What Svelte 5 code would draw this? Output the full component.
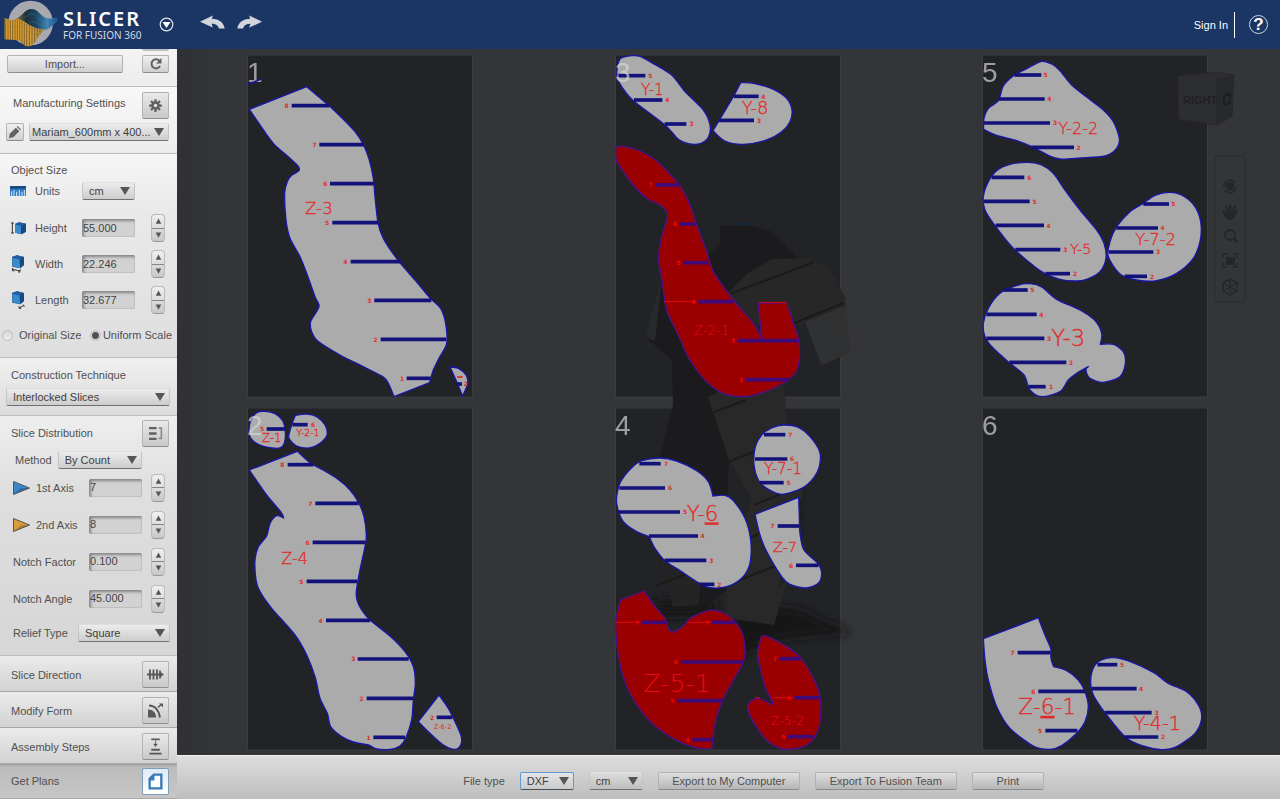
<script>
  let fileType = $state('DXF');
  let exportUnits = $state('cm');
  let scale = $state('uniform');

  const sizes = $state([
    { id: 'height', name: 'Height', value: '55.000' },
    { id: 'width', name: 'Width', value: '22.246' },
    { id: 'length', name: 'Length', value: '32.677' }
  ]);
  const slices = $state([
    { id: 'axis1', name: '1st Axis', value: '7', color: 'blue' },
    { id: 'axis2', name: '2nd Axis', value: '8', color: 'gold' },
    { id: 'factor', name: 'Notch Factor', value: '0.100' },
    { id: 'angle', name: 'Notch Angle', value: '45.000' }
  ]);
  const panels = [
    { name: 'Slice Direction', icon: 'direction' },
    { name: 'Modify Form', icon: 'form' },
    { name: 'Assembly Steps', icon: 'assembly' },
    { name: 'Get Plans', icon: 'plans', active: true }
  ];

  // Part outlines are point lists in thirds of a canvas unit; "!" marks a sharp corner.
  // A slot is [start, end, y, number, number x]; a label is [text, x, baseline, size].
  const sheets = [
    {
      n: 1, x: 248, y: 55, ox: 240, oy: 50,
      parts: [
        {
          pts: '28,178! 200,110! 265,165 310,208 345,245 370,283 388,330 400,385 405,440 414,518 430,565 475,632 525,690 572,746 602,775 617,820 620,880 597,925 580,960 569,998! 462,1040! 445,1000 428,980 370,950 300,915 233,873 215,845 212,815 237,770 225,740 200,670 180,620 150,565 138,510 134,430 142,395 155,376 177,362 174,348 150,325 100,280 60,225',
          slots: [[155, 268, 167, 8, 140], [238, 372, 284, 7, 224], [270, 402, 401, 6, 256], [277, 414, 518, 5, 261], [332, 484, 635, 4, 316], [403, 574, 751, 3, 388], [422, 619, 868, 2, 407], [500, 572, 985, 1, 486]],
          label: ['Z-3', 195, 491, 50]
        },
        { pts: '630,951! 655,955 678,975 683,1000 668,1038! 650,995', slots: [[650, 666, 1002, 2, 677]], marks: [[651, 668, 981]] }
      ]
    },
    {
      n: 2, x: 248, y: 408, ox: 240, oy: 400,
      parts: [
        { pts: '50,38 75,34 105,41 128,62 136,95 133,130 120,144 95,144 60,135 35,118 27,95 32,62', slots: [[80, 135, 87, 5, 66]], label: ['Z-1', 65, 126, 36] },
        { pts: '166,46! 200,42 230,50 255,75 261,105 240,130 208,144 170,138 150,120 146,108 155,75', slots: [[157, 203, 74, 6, 219]], label: ['Y-2-1', 169, 109, 28] },
        {
          pts: '28,210! 172,154! 212,190 240,205 290,235 330,270 356,308 372,350 379,405 375,440 360,510 349,575 351,600 365,630 390,660 450,708 495,755 520,800 526,850 520,900 515,960 497,1015 480,1038 450,1048 410,1047 385,1035 340,1026 305,1010 272,980 262,940 240,895 225,830 200,765 165,705 95,625 60,575 48,540 45,480 55,440 80,408 90,370 110,347 131,354! 122,335 80,285',
          slots: [[143, 220, 194, 8, 127], [226, 356, 310, 7, 211], [218, 375, 427, 6, 203], [200, 352, 544, 5, 184], [258, 390, 661, 4, 242], [353, 506, 777, 3, 340], [380, 520, 895, 2, 365], [400, 495, 1012, 1, 386]],
          label: ['Z-4', 124, 492, 48]
        },
        { pts: '597,885! 535,965! 570,1000 610,1035 645,1048 662,1035 664,1010 645,965 625,925', slots: [[590, 637, 952, 2, 576]], label: ['Z-6-2', 581, 987, 20, true] }
      ]
    },
    {
      n: 3, x: 616, y: 55, ox: 600, oy: 50,
      parts: [
        { pts: '60,27 95,17 120,19 155,38 215,75 255,125 310,180 330,225 325,262 300,281 265,281 235,268 195,225 100,152 65,110 50,75', slots: [[55, 136, 77, 5, 151], [102, 187, 150, 4, 202], [194, 259, 222, 3, 275]], label: ['Y-1', 123, 134, 46] },
        { pts: '422,98! 460,100 520,118 560,145 576,180 570,215 545,245 500,270 430,283 375,273 339,242! 370,190 400,140', slots: [[402, 476, 139, 4, 490], [357, 462, 211, 3, 477]], label: ['Y-8', 425, 193, 54] },
        {
          bad: true,
          pts: '48,292! 70,289 120,303 170,333 215,378 245,415 270,465 290,525 320,605 340,665 400,750 460,820 486,868! 474,760! 560,758! 580,820 596,870 598,930 585,970 540,1005 480,1030 430,1040 370,1030 320,995 270,930 230,845 200,780 186,690 176,625 185,560 203,498 185,468 140,445 100,405 60,350 48,325',
          slots: [[166, 238, 405, 7, 152], [240, 288, 522, 6, 225], [250, 325, 638, 5, 236], [295, 400, 755, 4, 281], [413, 592, 872, 3, 400], [438, 570, 989, 2, 424]],
          marks: [[192, 290, 755], [478, 560, 757]],
          label: ['Z-2-1', 281, 855, 40]
        }
      ]
    },
    {
      n: 4, x: 616, y: 408, ox: 600, oy: 400,
      parts: [
        {
          pts: '125,182 180,174 230,183 290,212 325,245 339,288! 375,286 400,302 435,355 452,420 450,490 425,535 380,560 330,563 295,548 240,512 195,482 165,445 148,410! 110,395 70,365 53,325 50,290 62,245 95,203',
          slots: [[118, 182, 191, 7, 198], [58, 195, 264, 6, 210], [55, 240, 336, 5, 255], [147, 294, 408, 4, 308], [194, 319, 481, 3, 334], [298, 343, 553, 2, 358]],
          label: ['Y-6', 260, 362, 64]
        },
        { pts: '515,84 550,75 595,82 630,110 659,155 658,200 640,235 605,265 545,283 500,265 475,240 462,195 466,140 485,105', slots: [[492, 556, 104, 7, 571], [465, 562, 177, 6, 576], [480, 551, 248, 5, 566]], label: ['Y-7-1', 492, 222, 46] },
        { pts: '465,343! 596,292! 598,350 600,400 612,450 655,492 665,520 655,550 618,564 570,553 545,530 500,455 480,405', slots: [[533, 597, 378, 7, 518], [588, 655, 496, 6, 573]], label: ['Z-7', 518, 455, 44] },
        {
          bad: true,
          pts: '62,600! 132,573! 165,620 195,655 205,685 218,696 250,678 268,657 300,640 330,631 365,636 400,660 425,695 435,745 430,785 400,840 365,905 345,970 335,1045! 300,1045 250,1030 180,990 125,935 85,870 62,800 50,730 48,660',
          slots: [[125, 200, 667, 7, 112], [335, 408, 667, 7, 321], [243, 430, 786, 6, 227], [233, 370, 902, 5, 218], [277, 340, 1019, 4, 263]],
          marks: [[48, 120, 667], [262, 335, 667]],
          label: ['Z-5-1', 130, 875, 76]
        },
        {
          bad: true,
          pts: '483,712! 497,708 560,740 605,778 640,835 660,890 661,960 645,1010 610,1040 550,1047 500,1020 460,965 443,925 450,905 475,895 500,905 516,915! 518,905! 495,860 480,800 473,760',
          slots: [[538, 602, 776, 7, 525], [583, 660, 893, 6, 568], [563, 642, 1010, 5, 550]],
          marks: [[465, 480, 893], [518, 583, 893]],
          label: ['Z-5-2', 512, 974, 38]
        }
      ]
    },
    {
      n: 5, x: 983, y: 55, ox: 970, oy: 50,
      parts: [
        { pts: '170,56 215,34 245,42 270,62 305,105 355,145 400,180 430,215 448,265 440,295 405,318 330,324 270,327 235,316 185,290 140,272 80,256 41,238! 42,205 55,175 85,152 100,108 130,78', slots: [[134, 214, 75, 5, 227], [86, 224, 147, 4, 238], [42, 240, 219, 3, 255], [184, 312, 292, 2, 326]], label: ['Y-2-2', 265, 251, 48] },
        { pts: '120,343 175,337 215,345 250,370 285,420 330,480 380,540 402,580 408,625 390,665 350,688 320,693 270,688 215,665 130,595 70,520 45,480 40,440 55,395 80,362', slots: [[65, 163, 382, 6, 178], [42, 179, 454, 5, 194], [77, 222, 526, 4, 236], [136, 271, 599, 3, 286], [226, 300, 671, 2, 315]], label: ['Y-5', 300, 611, 43] },
        { pts: '555,436 600,427 640,438 675,470 692,515 691,570 670,625 620,670 560,692 500,690 450,672 415,620 420,575 440,530 480,485 520,460', slots: [[520, 597, 462, 5, 610], [439, 564, 534, 4, 578], [417, 550, 606, 3, 564], [464, 531, 679, 2, 546]], label: ['Y-7-2', 496, 585, 49] },
        {
          pts: '145,705 180,701 215,711 260,748 330,780 375,812 395,850 391,883! 430,883 460,905 466,940 450,980 400,997 360,985 348,960 355,950! 320,970 295,990 270,1025 215,1040 180,1020 162,975 120,940 70,895 45,860 40,820 55,775 90,730',
          slots: [[102, 173, 720, 5, 187], [49, 200, 793, 4, 214], [49, 223, 865, 3, 237], [118, 289, 937, 2, 303], [176, 227, 1010, 1, 243]],
          label: ['Y-3', 244, 889, 68]
        }
      ]
    },
    {
      n: 6, x: 983, y: 408, ox: 970, oy: 600,
      parts: [
        { pts: '40,116! 205,53! 225,105 242,145 243,175 251,200! 290,212 325,240 345,275 355,320 345,365 320,400 275,437 240,448 190,438 120,385 80,320 55,240 45,180', slots: [[143, 242, 158, 7, 128], [205, 346, 274, 6, 190], [226, 322, 392, 5, 210]], label: ['Z-6-1', 145, 342, 65] },
        { pts: '395,180 430,173 475,183 550,217 595,250 650,275 685,315 695,355 675,400 620,440 575,449 520,438 470,415 410,345 370,285 362,240 372,200', slots: [[382, 442, 194, 5, 456], [365, 500, 266, 4, 513], [405, 545, 338, 3, 560], [464, 565, 411, 2, 579]], label: ['Y-4-1', 491, 391, 57] }
      ]
    }
  ];

  function outline(list) {
    const p = list.split(' ').map((s) => {
      const [x, y] = s.replace('!', '').split(',').map(Number);
      return { x, y, sharp: s.endsWith('!') };
    });
    const n = p.length;
    let d = `M${p[0].x} ${p[0].y}`;
    for (let i = 0; i < n; i++) {
      const before = p[(i + n - 1) % n];
      const a = p[i];
      const b = p[(i + 1) % n];
      const after = p[(i + 2) % n];
      const ax = a.sharp ? a.x : a.x + (b.x - before.x) / 7;
      const ay = a.sharp ? a.y : a.y + (b.y - before.y) / 7;
      const bx = b.sharp ? b.x : b.x - (after.x - a.x) / 7;
      const by = b.sharp ? b.y : b.y - (after.y - a.y) / 7;
      d += `C${ax.toFixed(1)} ${ay.toFixed(1)} ${bx.toFixed(1)} ${by.toFixed(1)} ${b.x} ${b.y}`;
    }
    return d + 'Z';
  }
</script>

{#snippet stepper(name)}
  <span class="stepper">
    <button aria-label="Increase {name}"><svg viewBox="0 0 8 6"><path d="M4 0 7.200 6H.8z" /></svg></button>
    <button aria-label="Decrease {name}"><svg viewBox="0 0 8 6"><path d="M4 6 7.200 0H.8z" /></svg></button>
  </span>
{/snippet}

{#snippet arrow()}
  <svg class="arrow" viewBox="0 0 10 8" aria-hidden="true"><path d="M0 0h10L5 8z" /></svg>
{/snippet}

{#snippet cube(kind)}
  <svg class="cube" viewBox="0 0 48 54" aria-hidden="true">
    {#if kind === 'height'}
      <path d="M3 12h9M3 42h9M7 12v30" stroke="#333" stroke-width="3" fill="none" />
      <path d="m15 15 12-5 21 4v25l-13 7-20-5z" fill="#174a80" />
      <path d="m15 16 18 4v26l-18-5z" fill="#3a8ad0" /><path d="m15 15 12-5 21 4-15 6z" fill="#245f9c" />
    {:else}
      <path d="m6 6 15-5 21 5v25l-11 9-24-5z" fill="#174a80" />
      <path d="m7 8 21 4 3 28-23-6z" fill="#3a8ad0" /><path d="m6 6 15-5 21 5-14 6z" fill="#245f9c" />
      {#if kind === 'width'}
        <path d="m8 43 22 5M8 39l-1 8 6 1M31 43l-2 9-5-2" stroke="#333" stroke-width="3" fill="none" />
      {:else}
        <path d="m27 51 14-7M27 46l1 7 5-1M40 41l3 6" stroke="#333" stroke-width="3" fill="none" />
      {/if}
    {/if}
  </svg>
{/snippet}

<div class="app">
  <header>
    <svg class="logo" viewBox="0 0 180 147" aria-hidden="true">
      <defs>
        <linearGradient id="sea" x1="0" x2="1"><stop offset="0" stop-color="#8a7d45" /><stop offset=".25" stop-color="#1c2f3a" /><stop offset=".5" stop-color="#1d4666" /><stop offset=".75" stop-color="#3f86b8" /><stop offset="1" stop-color="#1c5088" /></linearGradient>
        <linearGradient id="gold" x1="0" x2="1"><stop offset="0" stop-color="#e8a52c" /><stop offset=".65" stop-color="#cf9c3e" /><stop offset="1" stop-color="#8d8355" /></linearGradient>
      </defs>
      <circle cx="92" cy="69" r="67" fill="#a7a9af" />
      <path d="M46 58c18-6 27-31 49-31 20 0 28 24 46 28 12 2 22-4 32-1l1 9c-14 10-24 24-40 27-24 6-50-4-88-32z" fill="url(#sea)" />
      <path d="M14 54c16 8 28 5 38 3 16 2 26 12 38 19 16 9 32 13 49 10-14 8-22 20-28 33-7 14-18 20-29 20-14 0-15-18-28-18l-40-3z" fill="url(#gold)" />
      <path d="M17 56v61M24 59v59M31 60v59M38 60v60M45 59v61M52 58v63M59 60v62M66 63v68M73 68v69M80 72v67M88 76v61M96 79v53M104 82v44M112 85v28M120 86v17" stroke="#54431f" stroke-width="2" fill="none" />
      <path d="M15 68c24 7 35 1 51 8 14 7 22 15 36 19 10 3 16 4 24 2M16 84c22 6 32 0 47 6 14 6 22 17 34 19 7 1 13 1 18-1M17 100c20 5 32 1 44 6 12 6 20 16 34 18" stroke="#c98f2c" stroke-width="1.500" fill="none" />
      <path d="M72 52c12-3 18-14 28-10 12 7 20 26 44 28M88 68c10-4 18-4 26 3 6 5 12 7 22 6" stroke="#4e91b8" stroke-width="2" fill="none" opacity=".5" />
    </svg>
    <div class="brand"><strong>SLICER</strong><span>FOR FUSION 360</span></div>
    <button class="plain drop" aria-label="Application menu">
      <svg viewBox="0 0 15 15"><circle cx="7.500" cy="7.500" r="6.300" fill="none" stroke="#dfe5ee" stroke-width="1.200" /><path d="M3.500 5h8l-4 6z" fill="#fff" /></svg>
    </button>
    <button class="plain arrows undo" aria-label="Undo">
      <svg viewBox="0 0 74 42"><path d="M0 19 38 0l-3 10c22 1 36 12 38 29H56c-2-9-9-14-22-14l4 11z" fill="#d3d5dd" /></svg>
    </button>
    <button class="plain arrows" aria-label="Redo">
      <svg viewBox="0 0 74 42"><path d="M74 19 36 0l3 10C17 11 3 22 1 39h17c2-9 9-14 22-14l-4 11z" fill="#d3d5dd" /></svg>
    </button>
    <a class="signin" href="#signin">Sign In</a>
    <button class="plain help" aria-label="Help"><span>?</span></button>
  </header>

  <main>
    <aside>
      <section class="import">
        <div class="sliver"></div>
        <button class="btn wide">Import...</button>
        <button class="btn reload" aria-label="Reload">
          <svg viewBox="0 0 14 12"><path d="M10.500 3A4.500 4.500 0 1 0 11 8" fill="none" stroke="#606060" stroke-width="2" /><path d="M12.500 0v5.500H7z" fill="#606060" /></svg>
        </button>
      </section>

      <section class="manufacturing">
        <div class="head">
          <h2 class="indent">Manufacturing Settings</h2>
          <button class="btn tool" aria-label="Manufacturing settings">
            <svg viewBox="-8 -8 16 16"><path d="M0-6.800V6.800M-6.800 0H6.800M-4.800-4.800 4.800 4.800M4.800-4.800-4.800 4.800" stroke="#606060" stroke-width="2.400" /><circle r="4.600" fill="#606060" /><circle r="1.800" fill="#e4e4e4" /></svg>
          </button>
        </div>
        <div class="row preset">
          <button class="btn pencil" aria-label="Edit preset">
            <svg viewBox="0 0 14 14"><path d="m0 14 1-5 7-7 4 4-7 7zM9 1l1-1 4 4-1 1z" fill="#606060" /></svg>
          </button>
          <span class="select grow"><select aria-label="Material preset"><option>Mariam_600mm x 400...</option></select>{@render arrow()}</span>
        </div>
      </section>

      <section class="size">
        <h2>Object Size</h2>
        <div class="row units">
          <svg class="ruler" viewBox="0 0 48 30" aria-hidden="true"><path d="M0 0h48v30H0z" fill="#2f78bd" /><path d="M0 0h48v8H0z" fill="#174b82" /><path d="M5 30V16M12 30V12M20 30V17M28 30V12M36 30V17M43 30V12" stroke="#d9ecfb" stroke-width="3" /></svg>
          <label for="units">Units</label>
          <span class="select"><select id="units"><option>cm</option></select>{@render arrow()}</span>
        </div>
        {#each sizes as s}
          <div class="row measure">
            {@render cube(s.id)}
            <label for={s.id}>{s.name}</label>
            <input class="field" id={s.id} bind:value={s.value} />
            {@render stepper(s.name)}
          </div>
        {/each}
        <div class="row radios">
          <label><input type="radio" name="scale" value="original" bind:group={scale} /><span>Original Size</span></label>
          <label><input type="radio" name="scale" value="uniform" bind:group={scale} /><span>Uniform Scale</span></label>
        </div>
      </section>

      <section class="technique">
        <h2><label for="technique">Construction Technique</label></h2>
        <span class="select"><select id="technique"><option>Interlocked Slices</option></select>{@render arrow()}</span>
      </section>

      <section class="distribution">
        <div class="head">
          <h2>Slice Distribution</h2>
          <button class="btn tool" aria-label="Slice distribution">
            <svg viewBox="0 0 14 14"><path d="M1 2h7M1 7h7M1 12h7" stroke="#606060" stroke-width="2.200" /><path d="M10 2h2.500v9.500H10" fill="none" stroke="#8a8a8a" stroke-width="1.500" /></svg>
          </button>
        </div>
        <div class="row method">
          <label for="method">Method</label>
          <span class="select"><select id="method"><option>By Count</option></select>{@render arrow()}</span>
        </div>
        {#each slices as s}
          <div class="row slice" class:axis={s.color}>
            {#if s.color}
              <svg class="flag {s.color}" viewBox="0 0 17 14" aria-hidden="true"><path d="M.5.5 16.500 7 .5 13.500z" stroke="#555" /><path d="M1 13 16 7H8z" fill="#000" opacity=".2" /></svg>
            {/if}
            <label for={s.id}>{s.name}</label>
            <input class="field" id={s.id} bind:value={s.value} />
            {@render stepper(s.name)}
          </div>
        {/each}
        <div class="row relief">
          <label for="relief">Relief Type</label>
          <span class="select"><select id="relief"><option>Square</option></select>{@render arrow()}</span>
        </div>
      </section>

      {#each panels as p}
        <section class="panel" class:active={p.active}>
          <h2>{p.name}</h2>
          <button class="btn tool" aria-label={p.name}>
            {#if p.icon === 'direction'}
              <svg class="big" viewBox="0 0 17 12"><path d="M0 6h14M3 1v10M6.500 1v10M10 1v10M13 2v8" stroke="#585858" stroke-width="1.800" /><path d="m13 3 4 3-4 3z" fill="#585858" /></svg>
            {:else if p.icon === 'form'}
              <svg class="big" viewBox="0 0 17 16"><path d="M1 15V7c5 0 8 3 8 8z" fill="#585858" /><path d="M2 3c6 0 10 5 11 12" fill="none" stroke="#585858" stroke-width="2" /><path d="m11 5 3-3" stroke="#585858" stroke-width="1.500" /><path d="M12 1h4v4z" fill="#585858" /></svg>
            {:else if p.icon === 'assembly'}
              <svg class="big" viewBox="0 0 14 18"><path d="M2.500 1.500h9M2.500 12.500h9M.5 16.500h13" stroke="#585858" stroke-width="2" /><path d="M7 3v3" stroke="#585858" /><path d="M4.500 6h5L7 9.500z" fill="#585858" /></svg>
            {:else}
              <svg class="big" viewBox="0 0 14 16"><path d="M5.500 1.500h7v13h-11v-9z" fill="#fff" stroke="#3a7ab8" stroke-width="2.200" /><path d="M6 1v6H1z" fill="#3a7ab8" /></svg>
            {/if}
          </button>
        </section>
      {/each}
    </aside>

    <div class="work">
      <div class="stage">
        <svg class="canvas" viewBox="177 49 1103 706">
          <defs>
            <filter id="soft" x="-30%" y="-60%" width="160%" height="220%"><feGaussianBlur stdDeviation="5" /></filter>
          </defs>
          {#each sheets as s}
            <rect x={s.x - 0.5} y={s.y} width="225" height="342" fill="#222326" stroke="#3b3c3f" />
          {/each}

          <g class="model">
            <path d="M740 612c30-8 60-6 80 8l33 12c-40 6-70 0-110 22-20-10-20-34-3-42zM655 600h60v16h-60z" fill="#131416" filter="url(#soft)" />
            <path d="m658 290-12 48 26 22 1 45-16 62-7 60 24 80 26 1 30-20-2-110 5-90-10-70-17-20-30-20z" fill="#1b1b1d" />
            <path d="M720 226h32l21 6 26 27-20 10-40 30-35 5v-46l16-14z" fill="#1b1b1d" />
            <path d="m658 290-13 47 10 4 6-55z" fill="#27292c" />
            <path d="m726 295 22-22 24-14 38-1 20 11 15 28 1 10-38 15-36 12-28-16z" fill="#272727" />
            <path d="m805 322 38-15 7 45-29 12z" fill="#2f3133" />
            <path d="M843 307h3l5 45-29 13-1-2 28-11z" fill="#35312e" />
            <path d="m708 397 22-10 54-2 4 60 18 60-14 60-18 60-48-7 2-60 24-58-24-43z" fill="#282828" />
            <path d="m806 490-2 45-6 10-6 26-14 20 12-70z" fill="#1e2124" />
            <path d="m655 540 50-16-6 80-26 3z" fill="#242425" />
            <g stroke="#1d1a18" stroke-width="2">
              <path d="m730 294 84-32M790 325l53-22M714 412l32-12M728 462l52-20M754 505l44-18M740 580l50-20M656 586l56-22M745 540l58-26" />
            </g>
            <path d="M733 224h17" stroke="#16293a" stroke-width="2" />
          </g>

          <g class="nav">
            <path d="m1178 76 38-4 18 3-2 41-14 9-39-6z" fill="#2d2e30" stroke="#2a2a2c" />
            <path d="m1216 79 18-4-2 41-16 9z" fill="#28292b" />
            <text x="1183" y="104" font-size="11" font-weight="bold">RIGHT</text>
            <path d="m1224 96 6-2v9l-6 2zM1228 92v3" fill="none" stroke="#1b1c1e" stroke-width="1.500" />
            <g opacity=".75">
              <rect x="1215" y="156" width="30" height="146" rx="3" fill="none" stroke="#28292b" />
              <path d="M1224 187a6 6 0 0 1 11-4M1236 187a6 6 0 0 1-11 3" fill="none" stroke="#202123" stroke-width="1.500" />
              <circle cx="1230" cy="186" r="4" />
              <path d="m1225 217-3-6 2-1 3 3-2-7 2-1 2 6v-7h2l1 7 2-6 2 1-2 6 3-3 1 1-4 8-2 2h-4z" />
              <circle cx="1230" cy="235" r="5" fill="none" stroke="#202123" stroke-width="1.800" /><path d="m1234 239 3 3" stroke="#202123" stroke-width="2.500" />
              <rect x="1226" y="257" width="9" height="8" />
              <path d="M1223 258v-4h4M1233 254h4v4M1237 263v4h-4M1227 267h-4v-4" fill="none" stroke="#202123" stroke-width="1.500" />
              <path d="m1230 279 7 4v8l-7 4-7-4v-8z" fill="none" stroke="#202123" stroke-width="1.500" /><path d="m1223 283 14 8M1237 283l-14 8M1230 279v16" stroke="#202123" />
            </g>
          </g>

          {#each sheets as s}
            <g transform="translate({s.ox} {s.oy}) scale(.33333)">
              {#each s.parts as p}
                <g class="part" class:bad={p.bad}>
                  <path class="outline" d={outline(p.pts)} />
                  {#each p.marks ?? [] as m}
                    <path class="mark" d="M{m[0]} {m[2]}H{m[1]}" />
                  {/each}
                  {#each p.slots as t}
                    <path class="slot" d="M{t[0]} {t[2]}H{t[1]}" />
                    <text class="num" x={t[4]} y={t[2] + 7}>{t[3]}</text>
                  {/each}
                  {#if p.label}
                    <text class="name" class:heavy={p.label[4]} x={p.label[1]} y={p.label[2]} font-size={p.label[3]}>{#each p.label[0] as ch}{#if ch === '6' && !p.label[4]}<tspan text-decoration="underline">{ch}</tspan>{:else}{ch}{/if}{/each}</text>
                  {/if}
                </g>
              {/each}
            </g>
            <text class="page" x={s.x - 1} y={s.y + 27}>{s.n}</text>
          {/each}
          <path d="m248 84 6-2 7-3" stroke="#15159a" stroke-width="1.500" fill="none" />
        </svg>
      </div>

      <footer>
        <label for="filetype">File type</label>
        <span class="select focus"><select id="filetype" bind:value={fileType}><option>DXF</option><option>EPS</option><option>PDF</option></select>{@render arrow()}</span>
        <span class="select"><select aria-label="Export units" bind:value={exportUnits}><option>cm</option><option>mm</option><option>in</option></select>{@render arrow()}</span>
        <button class="btn export">Export to My Computer</button>
        <button class="btn export">Export To Fusion Team</button>
        <button class="btn print">Print</button>
      </footer>
    </div>
  </main>
</div>

<style>
  :global(body) { background: #fff; }
  .app { display: flex; flex-direction: column; min-height: 100vh; font: 11px/14px "Liberation Sans", Arial, sans-serif; color: #505050; }
  .app :global(*) { box-sizing: border-box; }
  button, select, input { font: inherit; color: inherit; margin: 0; }
  svg { display: block; }

  header { display: flex; align-items: center; height: 49px; padding-right: 12px; background: #1b3565; color: #fff; flex: none; }
  .logo { width: 60px; height: 49px; flex: none; }
  .brand { display: flex; flex-direction: column; margin-left: 3px; width: 96px; font-family: "Noto Sans", sans-serif; white-space: nowrap; }
  .brand strong { font-size: 20px; line-height: 20px; font-weight: 600; letter-spacing: 2px; }
  .brand span { font-size: 10px; line-height: 12px; color: #d3d9e4; }
  .plain { padding: 0; border: 0; background: none; width: 25px; flex: none; }
  .plain svg { width: 25px; height: 15px; }
  .drop { width: 15px; }
  .drop svg { width: 15px; }
  .arrows { padding-bottom: 4px; }
  .undo { margin: 0 12px 0 26px; }
  .signin { margin-left: auto; padding: 6px 6px 6px 0; border-right: 1px solid #fff; color: #fff; text-decoration: none; }
  .help { display: grid; place-items: center; width: 19px; height: 19px; margin: 0 0 0 14px; border: 1px solid #ccd3df; border-radius: 50%; color: #fff; }
  .help span { font-size: 17px; line-height: 17px; font-weight: bold; }

  main { display: grid; grid-template-columns: 177px 1fr; flex: 1; }
  aside { min-width: 0; padding-bottom: 1px; }
  section { background: linear-gradient(#f6f6f6, #e6e6e6); border-bottom: 1px solid #bdbdbd; }
  h2 { margin: 0; font: inherit; white-space: nowrap; }
  label { white-space: nowrap; }
  .head { display: flex; justify-content: space-between; align-items: center; height: 28px; padding: 0 8px 0 11px; }
  .indent { padding: 0 0 4px 2px; }
  .row { display: flex; align-items: center; }

  .btn { display: grid; place-items: center; height: 18px; padding: 0; border: 1px solid #b2b2b2; border-bottom-color: #8d8d8d; border-radius: 2px; background: linear-gradient(#f1f1f1, #cfcfcf); white-space: nowrap; }
  .tool { width: 27px; height: 27px; background: linear-gradient(#e9e9e9, #c9c9c9); flex: none; }
  .tool svg { width: 15px; height: 15px; }
  .tool .big { width: 17px; height: 17px; }

  .import { position: relative; display: flex; justify-content: space-between; height: 38px; padding: 6px 8px 0 7px; background: linear-gradient(#f4f4f4, #ececec); }
  .sliver { position: absolute; top: 0; right: 8px; width: 27px; height: 2px; background: #bdbdbd; border-radius: 0 0 2px 2px; }
  .wide { width: 116px; }
  .reload { width: 27px; }
  .reload svg { width: 14px; height: 12px; }

  .manufacturing { height: 67px; padding-top: 4px; background: linear-gradient(#f8f8f8, #ececec); }
  .preset { gap: 5px; padding: 4px 8px 0 6px; }
  .pencil { width: 18px; flex: none; }
  .pencil svg { width: 12px; height: 12px; }

  .select { position: relative; display: block; flex: none; }
  .grow { flex: 1; min-width: 0; }
  select { display: block; width: 100%; height: 18px; padding: 0 14px 0 6px; appearance: none; border: 1px solid #c4c4c4; border-top-color: #dedede; border-bottom-color: #707070; border-radius: 2px; background: linear-gradient(#ececec, #cdcdcd); color: #404040; outline: 0; }
  .preset select { padding: 0 0 0 2px; }
  .arrow { position: absolute; right: 5px; top: 5px; width: 10px; height: 8px; fill: #555; pointer-events: none; }

  .size { height: 204px; background: linear-gradient(#f6f6f6, #e9e9e9 30%, #dedede); }
  .size h2 { padding: 9px 0 0 11px; }
  .units { height: 28px; margin-bottom: 5px; padding-left: 10px; }
  .ruler { width: 16px; height: 10px; margin-right: 9px; }
  .units label, .measure label { width: 47px; }
  .units .select { width: 53px; }
  .measure { height: 36px; padding: 0 12px 0 10px; }
  .cube { width: 16px; height: 18px; margin-right: 9px; flex: none; }
  .field { width: 53px; height: 18px; padding: 0 0 1px 1px; border: 0; border-radius: 2px; background: #d2d2d2; box-shadow: inset 2px 2px 3px #858585, inset -1px -1px 1px #c0c0c0; color: #444; outline: 0; flex: none; }
  .stepper { display: flex; flex-direction: column; width: 14px; height: 28px; margin-left: auto; border: 1px solid #bbb; border-bottom-color: #999; border-radius: 4px; background: linear-gradient(#f0f0f0, #c8c8c8); flex: none; overflow: hidden; }
  .stepper button { display: grid; place-items: center; flex: 1; width: 12px; padding: 0; border: 0; background: none; }
  .stepper button + button { border-top: 1px solid #858585; }
  .stepper svg { width: 7px; height: 6px; fill: #555; }

  .radios { height: 34px; padding: 0 5px 0 2px; justify-content: space-between; }
  .radios label { display: flex; align-items: center; }
  .radios input { appearance: none; width: 11px; height: 11px; border: 1px solid #bcbcbc; border-radius: 50%; background: linear-gradient(#d5d5d5, #eee); }
  .radios input:checked { background: radial-gradient(circle, #505050 0 3px, #d8d8d8 4px); }
  .radios span { margin-left: 6px; }
  .radios label + label span { margin-left: 2px; }

  .technique { height: 58px; padding: 10px 7px 0 6px; background: linear-gradient(#f0f0f0, #dcdcdc); }
  .technique h2 { padding: 0 0 6px 5px; }

  .distribution { height: 240px; padding-top: 3px; background: linear-gradient(#eee, #dfdfdf 30%, #d6d6d6); }
  .method { height: 22px; padding: 4px 0 0 15px; gap: 6px; }
  .method .select { width: 84px; }
  .slice { height: 37px; padding: 0 12px 0 13px; }
  .slice label { width: 76px; }
  .axis label { width: 53px; }
  .flag { width: 17px; height: 14px; margin-right: 6px; flex: none; }
  .blue { fill: #3b87cc; }
  .gold { fill: #dc9d3e; }
  .relief { height: 31px; padding: 0 7px 0 13px; justify-content: space-between; }
  .relief .select { width: 92px; }

  .panel { display: flex; justify-content: space-between; align-items: center; height: 36px; padding: 2px 8px 0 11px; border-bottom-color: #a8a8a8; background: linear-gradient(#ebebeb, #d2d2d2); }
  .panel.active { height: 35px; padding-top: 0; background: linear-gradient(#9f9f9f, #bcbcbc 3px, #c6c6c6); }
  .active .tool { border-color: #7c9dbb; background: linear-gradient(#dfeaf4, #fff); }

  .work { display: flex; flex-direction: column; min-width: 0; }
  .stage { flex: 1; background: linear-gradient(90deg, #303134, #343538 40px); }
  .canvas { width: 100%; height: 100%; font-family: "DejaVu Sans", sans-serif; }
  .nav { fill: #202123; font-family: "Liberation Sans", Arial, sans-serif; }
  .outline { fill: #ababab; stroke: #1818a8; stroke-width: 4; stroke-linejoin: round; }
  .slot { fill: none; stroke: #12127a; stroke-width: 11; }
  .mark { stroke: #e02828; stroke-width: 5; }
  .num { fill: #e02c2c; font-size: 18px; font-weight: bold; text-anchor: middle; }
  .name { fill: #e02c2c; stroke: #e02c2c; stroke-width: 1; font-weight: 200; }
  .heavy { font-weight: 400; stroke: none; }
  .bad .outline { fill: #9a0000; stroke: #50108c; }
  .bad .slot { stroke: #400a78; }
  .bad .num, .bad .name { fill: #e80c0c; stroke: none; }
  .bad .mark { stroke: #e00808; stroke-width: 3; }
  .page { fill: #d8d8d8; opacity: .68; font: 28px "Liberation Sans", Arial, sans-serif; }

  footer { display: flex; align-items: center; justify-content: center; gap: 15px; height: 45px; padding: 7px 0 0 50px; border-top: 1px solid #f0f0f0; border-bottom: 1px solid #fff; background: linear-gradient(#dedede, #bdbdbd); flex: none; }
  footer .select { width: 54px; }
  footer .btn { background: linear-gradient(#dedede, #b6b6b6); }
  footer select { background: linear-gradient(#dcdcdc, #bebebe); }
  .focus select { border-color: #5c9bd4; border-bottom-color: #46505a; background: linear-gradient(#e6e6e6, #cacaca); }
  .export { width: 142px; }
  .print { width: 72px; }
</style>
